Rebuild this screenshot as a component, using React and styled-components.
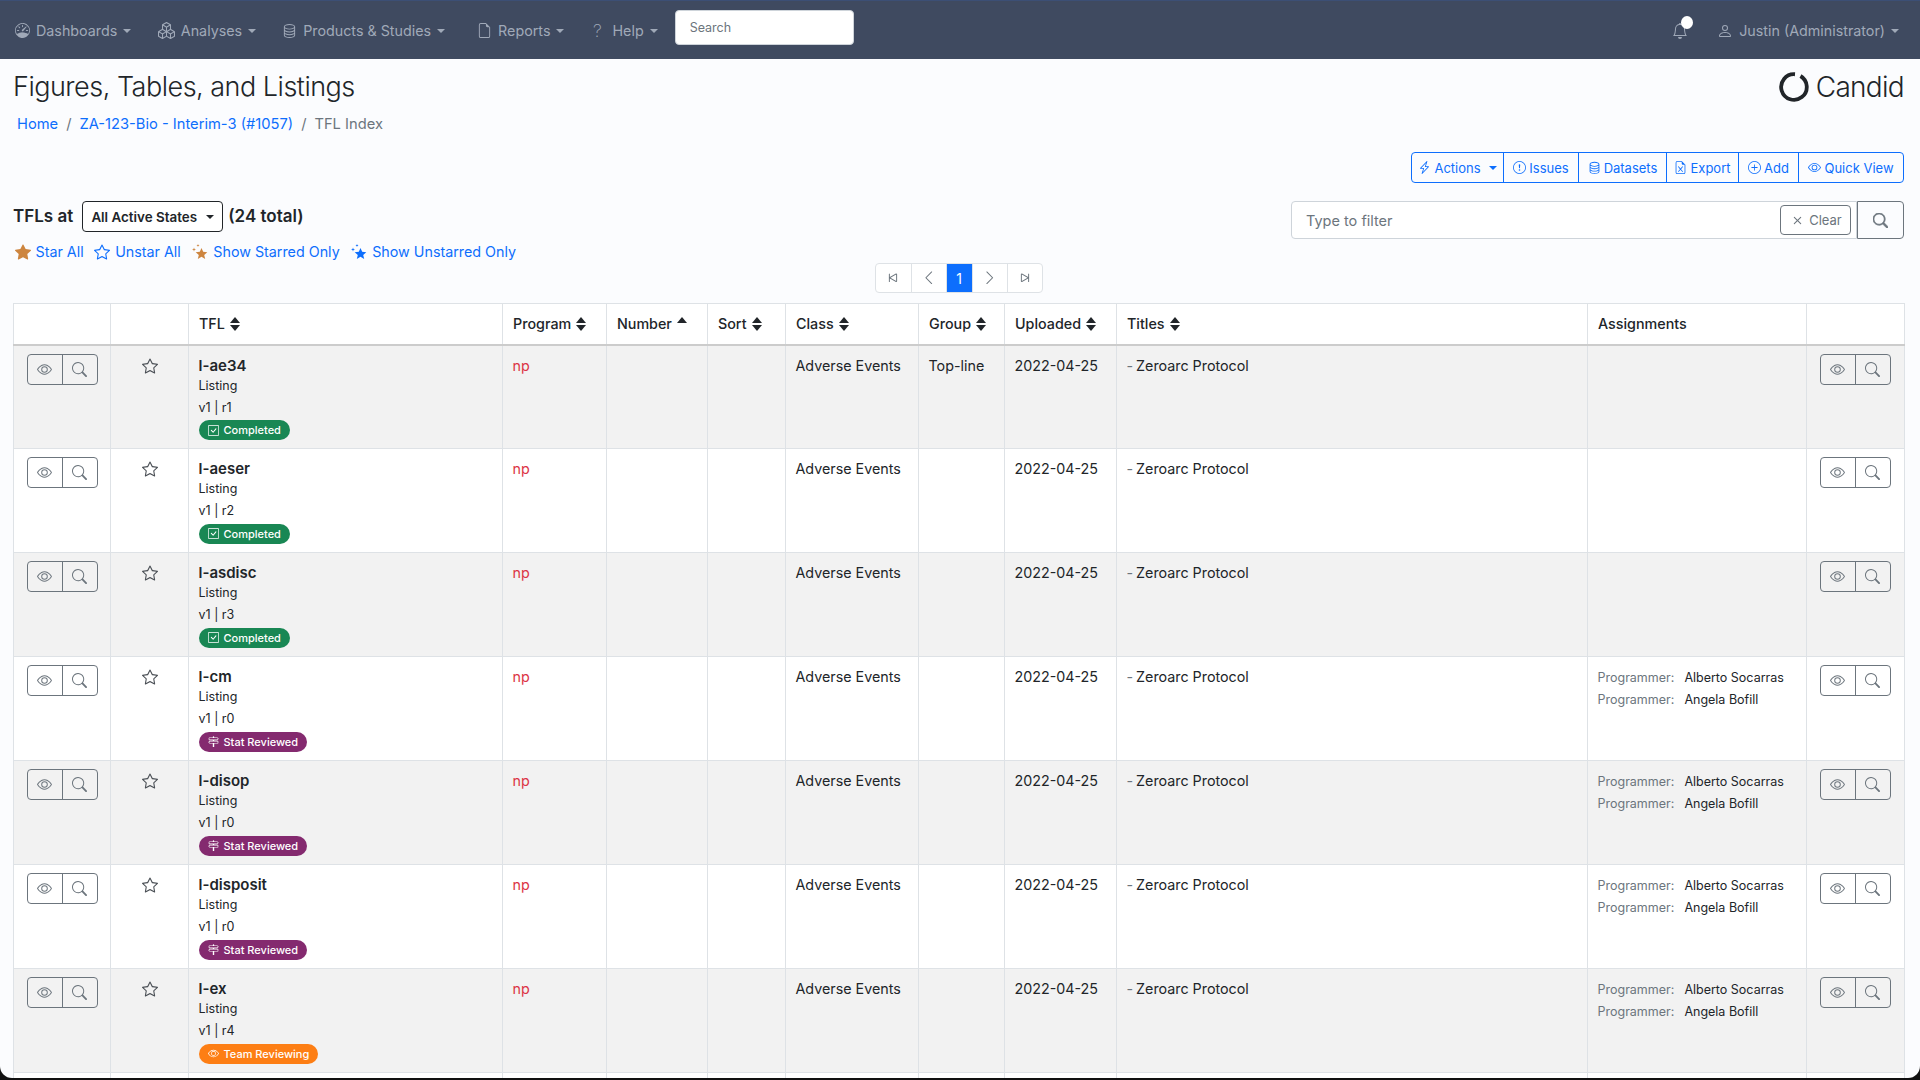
import React from 'react';
import styled, { createGlobalStyle } from 'styled-components';
import {
  BsBell, BsBoxes, BsCheckSquare, BsChevronLeft, BsChevronRight, BsDatabase, BsExclamationCircle, BsEye,
  BsFileEarmark, BsFileEarmarkExcel, BsLightningCharge, BsPerson, BsPlusCircle, BsSearch,
  BsSignpost2, BsSkipEnd, BsSkipStart, BsSpeedometer, BsStar, BsStarFill, BsX,
} from 'react-icons/bs';

const GlobalStyle = createGlobalStyle`
  html, body { margin: 0; padding: 0; }
  body {
    font-family: Inter, "Liberation Sans", sans-serif;
    font-size: 14.3px;
    color: #212529;
    background: #111;
    overflow: hidden;
  }
  * { box-sizing: border-box; }
`;

const Frame = styled.div`
  height: 1078px;
  overflow: hidden;
  background: #fbfcfe;
  border-radius: 0 0 12px 12px;
`;

const Navbar = styled.nav`
  height: 59px;
  display: flex;
  align-items: flex-start;
  padding: 0 21px 0 15px;
  background: #3f4a60;
  border-top: 1px solid #3c4f75;
  color: #a0a9b8;
`;

const NavItem = styled.div`
  height: 58px;
  display: flex;
  align-items: center;
  gap: 6px;
  margin-right: ${(p) => p.$mr}px;
  padding-top: 1px;
  white-space: nowrap;
  svg { font-size: ${(p) => p.$icon || 15}px; flex: none; }
`;

const HelpGlyph = styled.span`
  width: 18px;
  text-align: center;
  font-size: 18px;
  font-weight: 200;
  line-height: 18px;
`;

const Caret = styled.span`
  width: 0;
  height: 0;
  margin-left: ${(p) => p.$ml || 0}px;
  border-top: 4.5px solid currentColor;
  border-left: 4px solid transparent;
  border-right: 4px solid transparent;
`;

const NavSearch = styled.input`
  width: 179px;
  height: 35px;
  margin-top: 9px;
  padding: 0 14px;
  border: 1px solid #ced4da;
  border-radius: 4px;
  background: #fff;
  font: 12.5px Inter, sans-serif;
  &::placeholder { color: #6c757d; }
`;

const NavRight = styled.div`
  margin-left: auto;
  display: flex;
  align-items: center;
  height: 58px;
  padding-top: 1px;
`;

const Bell = styled.span`
  position: relative;
  display: flex;
  margin-right: 29px;
  font-size: 16px;
  &::after {
    content: '';
    position: absolute;
    top: -7px;
    left: 8.5px;
    width: 12px;
    height: 13px;
    border-radius: 50%;
    background: #fff;
  }
`;

const UserItem = styled.div`
  display: flex;
  align-items: center;
  gap: 6px;
  white-space: nowrap;
  svg { font-size: 16px; }
`;

const Content = styled.main`
  padding: 0 16px 0 13px;
`;

const TitleRow = styled.div`
  display: flex;
  justify-content: space-between;
  align-items: flex-start;
  padding-top: 10px;
`;

const Title = styled.h1`
  margin: 0;
  padding-top: 1px;
  font-size: 27px;
  line-height: 33px;
  font-weight: 300;
  letter-spacing: -0.5px;
  color: #212529;
`;

const Logo = styled.div`
  display: flex;
  align-items: center;
  gap: 7px;
  margin-top: 1px;
  font-size: 28px;
  line-height: 34px;
  font-weight: 300;
  letter-spacing: -0.7px;
`;

const Breadcrumb = styled.div`
  display: flex;
  gap: 8px;
  height: 22px;
  margin-top: 9px;
  padding-left: 4px;
  font-size: 14.7px;
  line-height: 22px;
  color: #6c757d;
`;

const Link = styled.a`
  color: #0d6efd;
  text-decoration: none;
`;

const ActionRow = styled.div`
  display: flex;
  justify-content: flex-end;
  margin-top: 17px;
`;

const ActionGroup = styled.div`
  display: flex;
  height: 31px;
  border: 1px solid #0d6efd;
  border-radius: 4px;
  color: #0d6efd;
`;

const ActionButton = styled.div`
  width: ${(p) => p.$w}px;
  display: flex;
  align-items: center;
  justify-content: center;
  gap: 3px;
  font-size: 13px;
  white-space: nowrap;
  & + & { border-left: 1px solid #0d6efd; }
  svg { font-size: 13px; flex: none; }
`;

const FilterRow = styled.div`
  display: flex;
  justify-content: space-between;
  align-items: flex-start;
  height: 62px;
  margin-top: 18px;
`;

const StateLine = styled.div`
  display: flex;
  align-items: center;
  gap: 8px;
  height: 31px;
  font-size: 17px;
  font-weight: 600;
`;

const StateText = styled.span`
  padding-bottom: 2px;
`;

const StateSelect = styled.div`
  display: flex;
  align-items: center;
  justify-content: center;
  gap: 9px;
  width: 141px;
  height: 31px;
  margin: 0 -3px 0 1px;
  border: 1px solid #212529;
  border-radius: 4px;
  background: #fff;
  font-size: 13.4px;
`;

const StarLinks = styled.div`
  display: flex;
  gap: 10.5px;
  margin-top: 9px;
  padding-left: 1.5px;
  line-height: 22px;
`;

const StarLink = styled(Link)`
  display: flex;
  align-items: center;
  gap: 5px;
  svg { flex: none; }
`;

const FilterBox = styled.div`
  display: flex;
`;

const FilterField = styled.div`
  width: 566px;
  height: 38px;
  display: flex;
  align-items: center;
  padding: 0 5px 0 12px;
  background: #fff;
  border: 1px solid #ced4da;
  border-radius: 4px 0 0 4px;
`;

const FilterInput = styled.input`
  flex: 1;
  border: 0;
  outline: 0;
  background: transparent;
  font: 14.5px Inter, sans-serif;
  &::placeholder { color: #6c757d; }
`;

const ClearButton = styled.div`
  width: 71px;
  height: 30px;
  display: flex;
  align-items: center;
  justify-content: center;
  gap: 3px;
  border: 1px solid #6c757d;
  border-radius: 4px;
  color: #6c757d;
  font-size: 13px;
  svg { font-size: 17px; }
`;

const SearchButton = styled.div`
  width: 47px;
  height: 38px;
  display: flex;
  align-items: center;
  justify-content: center;
  border: 1px solid #6c757d;
  border-radius: 0 4px 4px 0;
  color: #6c757d;
  font-size: 15px;
  svg { stroke-width: 0.8; }
`;

const PagerRow = styled.div`
  display: flex;
  justify-content: center;
  margin-bottom: 10px;
`;

const Pager = styled.div`
  display: flex;
  height: 30px;
  background: #fff;
  border: 1px solid #dee2e6;
  border-radius: 4px;
  overflow: hidden;
`;

const PageCell = styled.div`
  width: ${(p) => p.$w}px;
  display: flex;
  align-items: center;
  justify-content: center;
  color: ${(p) => (p.$active ? '#fff' : '#6c757d')};
  background: ${(p) => (p.$active ? '#0d6efd' : 'transparent')};
  font-size: 14px;
  & + & { border-left: 1px solid #dee2e6; }
  svg { font-size: 15.5px; }
`;

const Table = styled.table`
  width: 1891px;
  table-layout: fixed;
  border-collapse: collapse;
`;

const HeadCell = styled.th`
  height: 41px;
  padding: 0 10px;
  background: #fff;
  border: 1px solid #dee2e6;
  border-bottom: 2px solid #ccc;
  text-align: left;
  font-weight: 500;
  white-space: nowrap;
`;

const HeadLabel = styled.span`
  display: flex;
  align-items: center;
  gap: 5px;
`;

const Row = styled.tr`
  height: 104px;
  background: ${(p) => (p.$striped ? '#f2f2f2' : '#fff')};
`;

const Cell = styled.td`
  padding: 9px 10px 0 9.5px;
  vertical-align: top;
  border: 1px solid #dee2e6;
  line-height: 22px;
  color: ${(p) => p.$color || 'inherit'};
`;

const ViewGroup = styled.div`
  display: flex;
  width: 71px;
  height: 31px;
  margin: -1px 0 0 3px;
  border: 1px solid #6c757d;
  border-radius: 4px;
  color: #6c757d;
`;

const ViewButton = styled.div`
  flex: 1;
  display: flex;
  align-items: center;
  justify-content: center;
  font-size: 15px;
  & + & { border-left: 1px solid #6c757d; }
`;

const RowStar = styled.div`
  display: flex;
  justify-content: center;
  padding: 3px 0 0 1px;
  font-size: 16px;
  color: #4a4f55;
`;

const TflName = styled.div`
  font-size: 15px;
  font-weight: 600;
`;

const TflLine = styled.div`
  height: 18px;
  margin-bottom: 4px;
  font-size: 12.5px;
  line-height: 18px;
  & + & { margin-bottom: 3px; }
`;

const Badge = styled.span`
  display: inline-flex;
  align-items: center;
  gap: 5px;
  height: 20px;
  padding: 0 9px;
  border-radius: 10px;
  background: ${(p) => p.$bg};
  color: #fff;
  font-size: 11px;
  font-weight: 500;
  line-height: 20px;
  white-space: nowrap;
  svg { font-size: 11px; }
`;

const TitleDash = styled.span`
  color: #6c757d;
  margin-right: 3px;
`;

const AssignmentList = styled.div`
  padding-top: 1px;
`;

const Assignment = styled.div`
  display: flex;
  gap: 10px;
  font-size: 12.5px;
  line-height: 22px;
`;

const AssignLabel = styled.span`
  color: #6c757d;
`;

const SparkleStar = ({ color }) => (
  <svg width="17" height="17" viewBox="0 0 17 17" fill={color}>
    <path d="M10.5 4l1.7 3.8 4.1.4-3.1 2.7 1 4.1-3.7-2.2-3.7 2.2 1-4.1-3.1-2.7 4.1-.4z" />
    <path d="M3 3.5l.5 1.5 1.5.5-1.5.5L3 7.5 2.5 6 1 5.5 2.5 5zM7 0l.4 1.1 1.1.4-1.1.4L7 3l-.4-1.1-1.1-.4 1.1-.4z" />
  </svg>
);

const SortIcon = ({ up }) => (
  <svg width="10" height="14" viewBox="0 0 10 14" fill="#212529">
    <path d="M5 0l5 6H0z" />
    {!up && <path d="M5 14L0 8h10z" />}
  </svg>
);

const COLUMNS = [
  { w: 97 }, { w: 78 }, { w: 314, label: 'TFL' }, { w: 104, label: 'Program' }, { w: 101, label: 'Number', up: true },
  { w: 78, label: 'Sort' }, { w: 133, label: 'Class' }, { w: 86, label: 'Group' }, { w: 112, label: 'Uploaded' },
  { w: 471, label: 'Titles' }, { w: 219, label: 'Assignments', plain: true }, { w: 98 },
];

const COMPLETED = { label: 'Completed', bg: '#198754', Icon: BsCheckSquare };
const STAT = { label: 'Stat Reviewed', bg: '#842a6f', Icon: BsSignpost2 };
const TEAM = { label: 'Team Reviewing', bg: '#fd7e14', Icon: BsEye };

const ROWS = [
  { name: 'l-ae34', version: 'v1 | r1', status: COMPLETED, group: 'Top-line' },
  { name: 'l-aeser', version: 'v1 | r2', status: COMPLETED },
  { name: 'l-asdisc', version: 'v1 | r3', status: COMPLETED },
  { name: 'l-cm', version: 'v1 | r0', status: STAT, assigned: true },
  { name: 'l-disop', version: 'v1 | r0', status: STAT, assigned: true },
  { name: 'l-disposit', version: 'v1 | r0', status: STAT, assigned: true },
  { name: 'l-ex', version: 'v1 | r4', status: TEAM, assigned: true },
];

const ViewButtons = () => (
  <ViewGroup>
    <ViewButton><BsEye /></ViewButton>
    <ViewButton><BsSearch /></ViewButton>
  </ViewGroup>
);

function App() {
  return (
    <>
      <GlobalStyle />
      <Frame>
        <Navbar>
          <NavItem $mr={26.5}><BsSpeedometer />Dashboards<Caret /></NavItem>
          <NavItem $mr={26} $icon={17}><BsBoxes />Analyses<Caret /></NavItem>
          <NavItem $mr={32}><BsDatabase />Products &amp; Studies<Caret /></NavItem>
          <NavItem $mr={24}><BsFileEarmark />Reports<Caret /></NavItem>
          <NavItem $mr={17}><HelpGlyph>?</HelpGlyph>Help<Caret /></NavItem>
          <NavSearch placeholder="Search" />
          <NavRight>
            <Bell><BsBell /></Bell>
            <UserItem><BsPerson />Justin (Administrator)<Caret /></UserItem>
          </NavRight>
        </Navbar>
        <Content>
          <TitleRow>
            <Title>Figures, Tables, and Listings</Title>
            <Logo>
              <svg width="30" height="30" viewBox="0 0 30 30" fill="none">
                <path d="M21.5 4A12.8 12.8 0 1 1 16 2.25" stroke="#212529" strokeWidth="3.8" />
              </svg>
              Candid
            </Logo>
          </TitleRow>
          <Breadcrumb>
            <Link>Home</Link>/<Link>ZA-123-Bio - Interim-3 (#1057)</Link>/<span>TFL Index</span>
          </Breadcrumb>
          <ActionRow>
            <ActionGroup>
              <ActionButton $w={91}><BsLightningCharge />Actions<Caret $ml={5} /></ActionButton>
              <ActionButton $w={75}><BsExclamationCircle />Issues</ActionButton>
              <ActionButton $w={88}><BsDatabase />Datasets</ActionButton>
              <ActionButton $w={72}><BsFileEarmarkExcel />Export</ActionButton>
              <ActionButton $w={60}><BsPlusCircle />Add</ActionButton>
              <ActionButton $w={105}><BsEye />Quick View</ActionButton>
            </ActionGroup>
          </ActionRow>
          <FilterRow>
            <div>
              <StateLine>
                <StateText>TFLs at</StateText>
                <StateSelect>All Active States<Caret /></StateSelect>
                <StateText>(24 total)</StateText>
              </StateLine>
              <StarLinks>
                <StarLink><BsStarFill size={16} color="#cd853f" />Star All</StarLink>
                <StarLink><BsStar size={16} />Unstar All</StarLink>
                <StarLink><SparkleStar color="#cd853f" />Show Starred Only</StarLink>
                <StarLink><SparkleStar color="#0d6efd" />Show Unstarred Only</StarLink>
              </StarLinks>
            </div>
            <FilterBox>
              <FilterField>
                <FilterInput placeholder="Type to filter" />
                <ClearButton><BsX />Clear</ClearButton>
              </FilterField>
              <SearchButton><BsSearch /></SearchButton>
            </FilterBox>
          </FilterRow>
          <PagerRow>
            <Pager>
              <PageCell $w={35}><BsSkipStart /></PageCell>
              <PageCell $w={35}><BsChevronLeft /></PageCell>
              <PageCell $w={26} $active>1</PageCell>
              <PageCell $w={35}><BsChevronRight /></PageCell>
              <PageCell $w={35}><BsSkipEnd /></PageCell>
            </Pager>
          </PagerRow>
          <Table>
            <colgroup>
              {COLUMNS.map((col, i) => <col key={i} width={col.w} />)}
            </colgroup>
            <thead>
              <tr>
                {COLUMNS.map((col, i) => (
                  <HeadCell key={i}>
                    {col.label && (
                      <HeadLabel>{col.label}{!col.plain && <SortIcon up={col.up} />}</HeadLabel>
                    )}
                  </HeadCell>
                ))}
              </tr>
            </thead>
            <tbody>
              {ROWS.map((row, i) => {
                const { Icon } = row.status;
                return (
                  <Row key={row.name} $striped={i % 2 === 0}>
                    <Cell><ViewButtons /></Cell>
                    <Cell><RowStar><BsStar /></RowStar></Cell>
                    <Cell>
                      <TflName>{row.name}</TflName>
                      <TflLine>Listing</TflLine>
                      <TflLine>{row.version}</TflLine>
                      <Badge $bg={row.status.bg}><Icon />{row.status.label}</Badge>
                    </Cell>
                    <Cell $color="#dc3545">np</Cell>
                    <Cell />
                    <Cell />
                    <Cell>Adverse Events</Cell>
                    <Cell>{row.group}</Cell>
                    <Cell>2022-04-25</Cell>
                    <Cell><TitleDash>-</TitleDash>Zeroarc Protocol</Cell>
                    <Cell>
                      {row.assigned && (
                        <AssignmentList>
                          <Assignment><AssignLabel>Programmer:</AssignLabel>Alberto Socarras</Assignment>
                          <Assignment><AssignLabel>Programmer:</AssignLabel>Angela Bofill</Assignment>
                        </AssignmentList>
                      )}
                    </Cell>
                    <Cell><ViewButtons /></Cell>
                  </Row>
                );
              })}
              <Row>
                {COLUMNS.map((col, i) => <Cell key={i} />)}
              </Row>
            </tbody>
          </Table>
        </Content>
      </Frame>
    </>
  );
}

export default App;
